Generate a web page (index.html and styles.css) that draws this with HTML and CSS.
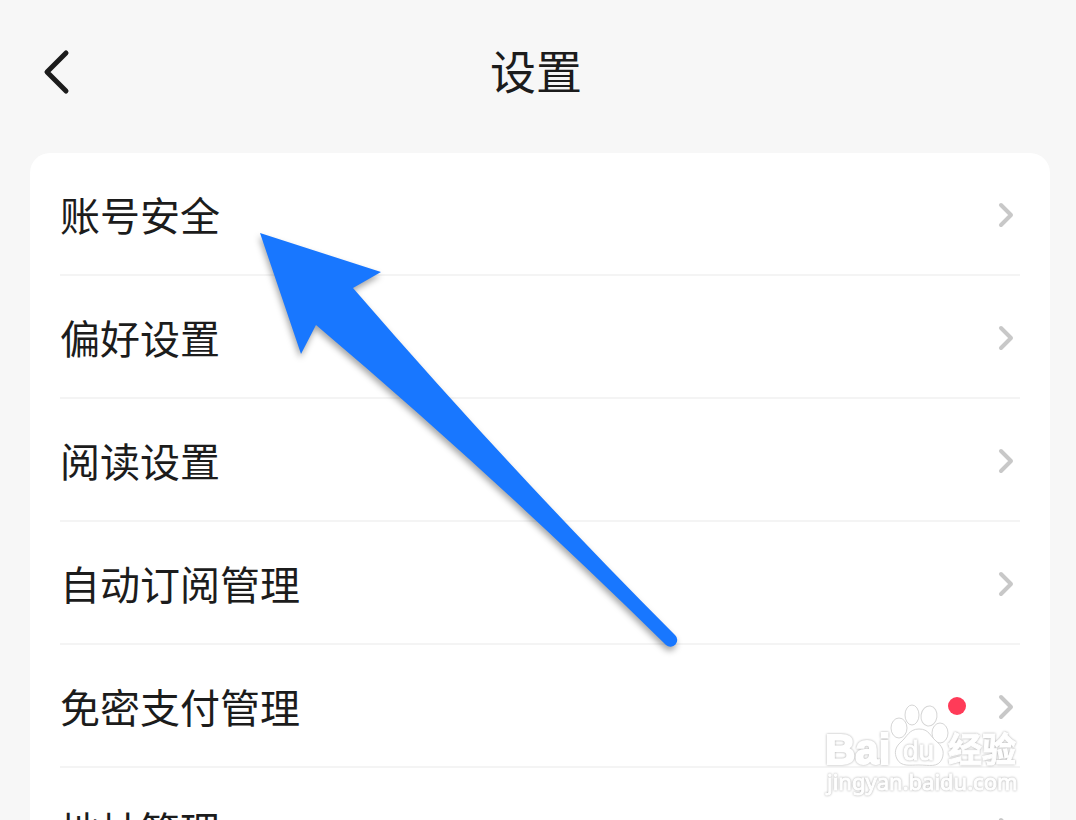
FILE: index.html
```html
<!DOCTYPE html>
<html lang="zh-CN">
<head>
<meta charset="utf-8">
<meta name="viewport" content="width=device-width, initial-scale=1">
<title>设置</title>
<link rel="stylesheet" href="styles.css">
</head>
<body>
<div class="screen">
  <header class="topbar">
    <button class="back" type="button" aria-label="返回">
      <svg width="32" height="48" viewBox="0 0 32 48" aria-hidden="true"><path d="M26 5 7 24l19 19"/></svg>
    </button>
    <h1 class="title">设置</h1>
  </header>
  <main class="card">
    <a class="row" href="#account"><span class="label">账号安全</span><svg class="chevron" viewBox="0 0 16 28" aria-hidden="true"><path d="M3 5l10 10L3 25"/></svg></a>
    <a class="row" href="#preference"><span class="label">偏好设置</span><svg class="chevron" viewBox="0 0 16 28" aria-hidden="true"><path d="M3 5l10 10L3 25"/></svg></a>
    <a class="row" href="#reading"><span class="label">阅读设置</span><svg class="chevron" viewBox="0 0 16 28" aria-hidden="true"><path d="M3 5l10 10L3 25"/></svg></a>
    <a class="row" href="#subscribe"><span class="label">自动订阅管理</span><svg class="chevron" viewBox="0 0 16 28" aria-hidden="true"><path d="M3 5l10 10L3 25"/></svg></a>
    <a class="row" href="#payment"><span class="label">免密支付管理</span><span class="dot"></span><svg class="chevron" viewBox="0 0 16 28" aria-hidden="true"><path d="M3 5l10 10L3 25"/></svg></a>
    <a class="row" href="#address"><span class="label">地址管理</span><svg class="chevron" viewBox="0 0 16 28" aria-hidden="true"><path d="M3 5l10 10L3 25"/></svg></a>
  </main>

  <svg class="pointer" width="440" height="440" viewBox="250 225 440 440" aria-hidden="true">
    <path d="M260 233 381 272 353 288Q514 474 675 635A6 6 0 0 1 666 645Q491 473 316 325L301 354Z"/>
  </svg>

  <svg class="watermark" width="210" height="100" viewBox="820 700 210 100" role="img" aria-label="Baidu经验">
    <text class="wm-text wm-bai" x="825" y="764">Bai</text>
    <g class="wm-paw">
      <ellipse cx="899" cy="728" rx="8" ry="10"/>
      <ellipse cx="912" cy="715" rx="7" ry="10"/>
      <ellipse cx="929" cy="716" rx="8" ry="10" transform="rotate(8 929 716)"/>
      <ellipse cx="940" cy="733" rx="8" ry="10"/>
      <path d="M919 729C909 729 907 737 901 742C895 747 894 753 897 759C901 767 910 765 919 765C929 765 938 768 942 759C945 751 942 746 936 741C930 736 929 729 919 729Z"/>
    </g>
    <text class="wm-text wm-du" x="903" y="760">du</text>
    <text class="wm-text wm-cn" x="948" y="762">经验</text>
    <text class="wm-text wm-url" x="827" y="790">jingyan.baidu.com</text>
  </svg>
</div>
</body>
</html>
```
FILE: styles.css
```css
* {
  box-sizing: border-box;
}

body {
  margin: 0;
  background: #f7f7f7;
  color: #1c1c1c;
  font-family: "Noto Sans CJK SC", sans-serif;
}

.screen {
  position: relative;
  height: 100vh;
  overflow: hidden;
}

.topbar {
  display: grid;
  grid-template-columns: 78px 1fr 82px;
  align-items: start;
  padding: 36px 0 51px;
}

.back {
  justify-self: end;
  display: flex;
  margin: 12px 6px 0 0;
  padding: 0;
  border: 0;
  background: none;
}

.back path {
  fill: none;
  stroke: #1c1c1c;
  stroke-width: 5;
  stroke-linecap: round;
  stroke-linejoin: round;
}

.title {
  margin: 0;
  font-size: 46px;
  font-weight: 400;
  line-height: 66px;
  text-align: center;
}

.card {
  margin: 0 26px 0 30px;
  padding: 0 30px;
  border-radius: 20px;
  background: #fff;
}

.row {
  display: flex;
  align-items: center;
  gap: 32px;
  height: 123px;
  padding-right: 6px;
  border-bottom: 2px solid #f4f4f4;
  color: inherit;
  text-decoration: none;
}

.label {
  flex: 1;
  font-size: 40px;
  line-height: 60px;
}

.dot {
  width: 18px;
  height: 18px;
  border-radius: 50%;
  background: #ff3b58;
}

.chevron {
  width: 16px;
  height: 28px;
  fill: none;
  stroke: #c8c8c8;
  stroke-width: 4;
  stroke-linecap: round;
  stroke-linejoin: round;
}

.pointer {
  position: absolute;
  top: 225px;
  left: 250px;
  fill: #1877ff;
  filter: drop-shadow(-1px 4px 3px rgba(0, 0, 0, 0.35));
  pointer-events: none;
}

.watermark {
  position: absolute;
  right: 46px;
  bottom: 20px;
  pointer-events: none;
}

.wm-paw {
  fill: #fff;
  stroke: #d6d6d6;
  stroke-width: 1;
}

.wm-text {
  fill: #fff;
  stroke: #fff;
  stroke-width: 1;
  font-family: "Liberation Sans", "Noto Sans CJK SC", sans-serif;
  filter: drop-shadow(0 0 1px #aaa);
}

.wm-bai {
  font-size: 42px;
  font-weight: 700;
  stroke-width: 2;
}

.wm-du {
  font-size: 28px;
}

.wm-cn {
  font-size: 34px;
  font-weight: 700;
}

.wm-url {
  font-family: "Noto Sans", sans-serif;
  font-size: 22px;
}
```
